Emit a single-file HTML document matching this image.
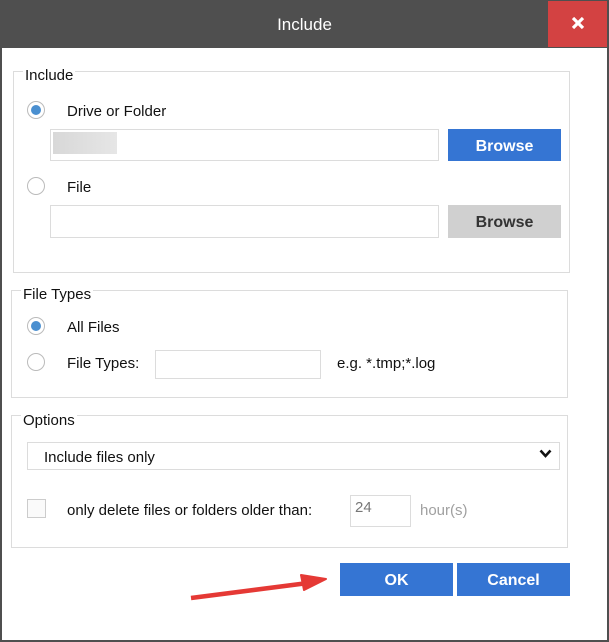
<!DOCTYPE html>
<html><head><meta charset="utf-8"><style>
*{margin:0;padding:0;box-sizing:border-box}
body{width:609px;height:642px;position:relative;background:#fff;font-family:"Liberation Sans",sans-serif;font-size:15px;color:#111;overflow:hidden}
.a{position:absolute}
.grp{position:absolute;border:1px solid #dcdcdc}
.lbl{position:absolute;background:#fff;padding:0 2px;line-height:18px}
.radio{position:absolute;width:18px;height:18px;border:1px solid #bbb;border-radius:50%;background:#fff}
.radio.on::after{content:"";position:absolute;left:3px;top:3px;width:10px;height:10px;border-radius:50%;background:#4a8fd0}
.inp{position:absolute;border:1px solid #dcdcdc;background:#fff}
.btn{position:absolute;display:flex;align-items:center;justify-content:center;font-weight:bold;font-size:16px;color:#fff;background:#3575d3;padding-top:3px}
.t{position:absolute;line-height:18px;white-space:nowrap}
</style></head><body>
<div class="a" style="left:0;top:0;width:609px;height:48px;background:#4f4f4f"></div>
<div class="t" style="left:0;width:609px;top:16px;text-align:center;color:#fff;font-size:17px">Include</div>
<div class="a" style="left:548px;top:1px;width:59px;height:46px;background:#d34242"></div>
<svg class="a" style="left:571px;top:17px" width="14" height="12"><path d="M2 1 L12 11 M12 1 L2 11" stroke="#fff" stroke-width="3.2"/></svg>
<div class="a" style="left:0;top:48px;width:2px;height:594px;background:#4f4f4f"></div>
<div class="a" style="left:607px;top:48px;width:2px;height:594px;background:#4f4f4f"></div>
<div class="a" style="left:0;top:640px;width:609px;height:2px;background:#4f4f4f"></div>

<div class="grp" style="left:13px;top:71px;width:557px;height:202px"></div>
<div class="lbl" style="left:23px;top:67px">Include</div>
<div class="radio on" style="left:27px;top:101px"></div>
<div class="t" style="left:67px;top:103px">Drive or Folder</div>
<div class="inp" style="left:50px;top:129px;width:389px;height:32px"></div>
<div class="a" style="left:53px;top:132px;width:64px;height:22px;background:linear-gradient(90deg,#d8d8d8,#e6e6e6)"></div>
<div class="btn" style="left:448px;top:129px;width:113px;height:32px">Browse</div>
<div class="radio" style="left:27px;top:177px"></div>
<div class="t" style="left:67px;top:179px">File</div>
<div class="inp" style="left:50px;top:205px;width:389px;height:33px"></div>
<div class="btn" style="left:448px;top:205px;width:113px;height:33px;background:#d0d0d0;color:#333">Browse</div>

<div class="grp" style="left:11px;top:290px;width:557px;height:108px"></div>
<div class="lbl" style="left:21px;top:286px">File Types</div>
<div class="radio on" style="left:27px;top:317px"></div>
<div class="t" style="left:67px;top:319px">All Files</div>
<div class="radio" style="left:27px;top:353px"></div>
<div class="t" style="left:67px;top:355px">File Types:</div>
<div class="inp" style="left:155px;top:350px;width:166px;height:29px"></div>
<div class="t" style="left:337px;top:355px">e.g. *.tmp;*.log</div>

<div class="grp" style="left:11px;top:415px;width:557px;height:133px"></div>
<div class="lbl" style="left:21px;top:412px">Options</div>
<div class="inp" style="left:27px;top:442px;width:533px;height:28px"></div>
<div class="t" style="left:44px;top:449px">Include files only</div>
<svg class="a" style="left:539px;top:449px" width="13" height="10"><path d="M1.5 1.5 L6.5 7 L11.5 1.5" stroke="#111" stroke-width="2.6" fill="none"/></svg>
<div class="a" style="left:27px;top:499px;width:19px;height:19px;border:1px solid #ccc;background:#fafafa"></div>
<div class="t" style="left:67px;top:502px">only delete files or folders older than:</div>
<div class="inp" style="left:350px;top:495px;width:61px;height:32px"></div>
<div class="t" style="left:355px;top:499px;color:#777">24</div>
<div class="t" style="left:420px;top:502px;color:#a0a0a0">hour(s)</div>

<div class="btn" style="left:340px;top:563px;width:113px;height:33px">OK</div>
<div class="btn" style="left:457px;top:563px;width:113px;height:33px">Cancel</div>
<svg class="a" style="left:0;top:0" width="609" height="642"><path d="M191 598 L308 583" stroke="#e53935" stroke-width="4.5"/><path d="M326 579 L301 575 L304 590 Z" fill="#e53935" stroke="#e53935" stroke-width="2" stroke-linejoin="round"/></svg>
</body></html>
